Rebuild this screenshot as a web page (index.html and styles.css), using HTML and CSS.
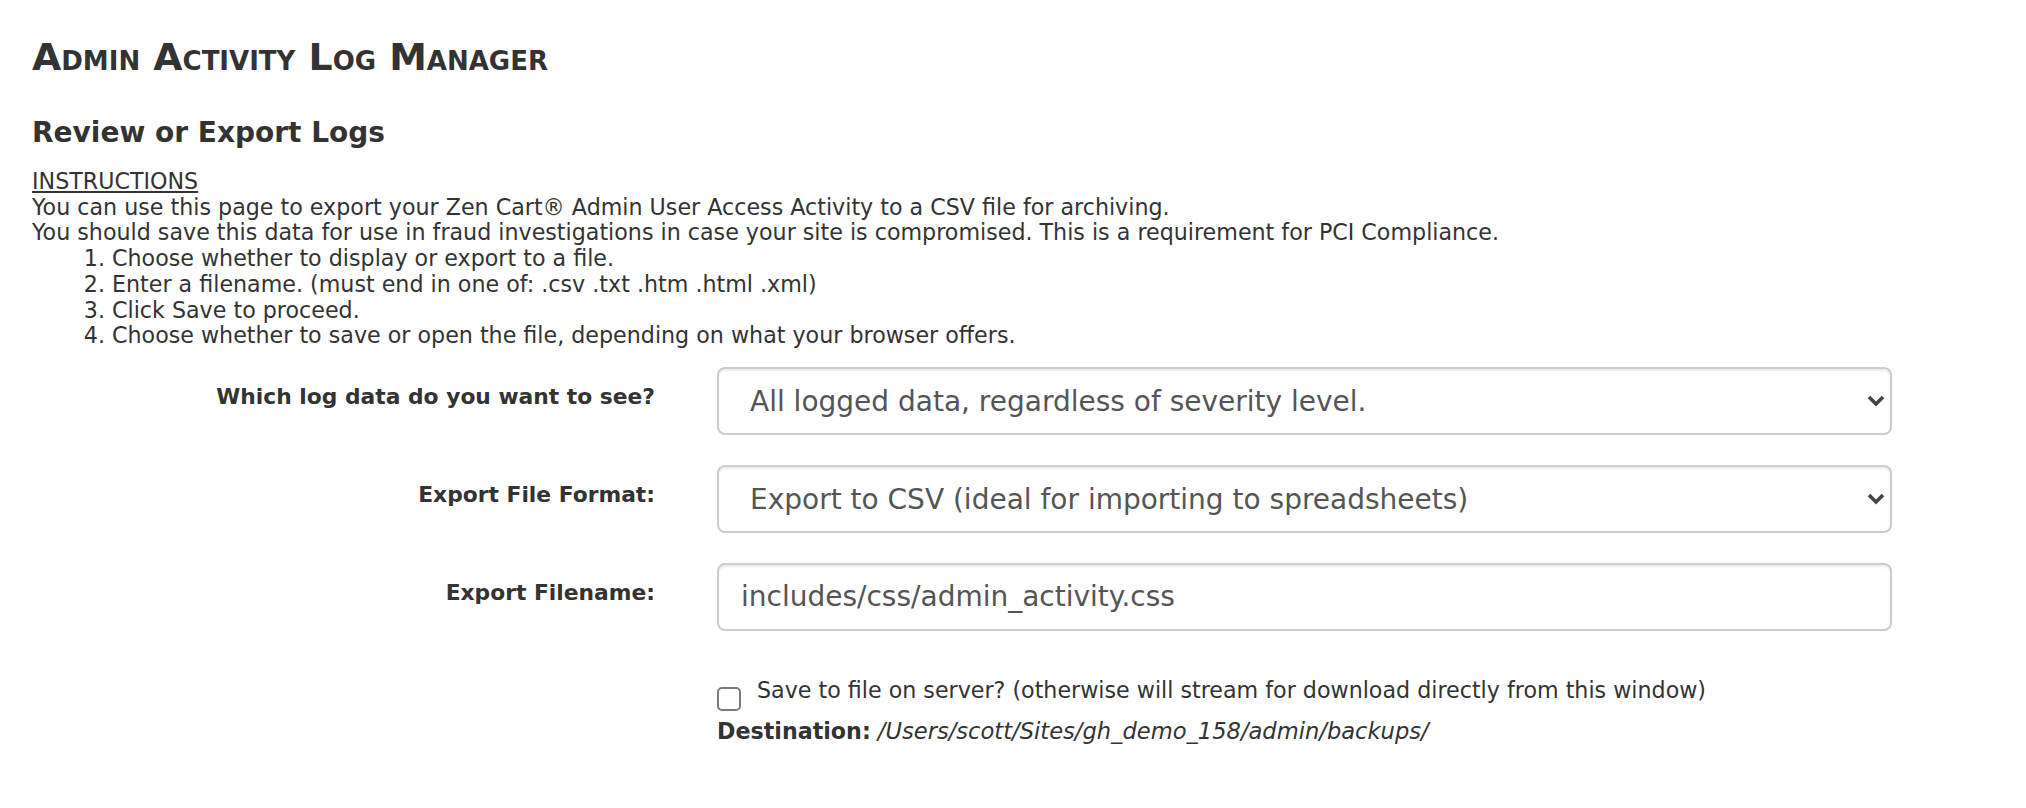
FILE: index.html
```html
<!DOCTYPE html>
<html lang="en">
<head>
<meta charset="utf-8">
<title>Admin Activity Log Manager</title>
<link rel="stylesheet" href="styles.css">
</head>
<body>
<div class="page">
  <h1 class="title">Admin Activity Log Manager</h1>
  <h2 class="subtitle">Review or Export Logs</h2>
  <div class="instructions">
    <div class="instr-head">INSTRUCTIONS</div>
    <div>You can use this page to export your Zen Cart® Admin User Access Activity to a CSV file for archiving.</div>
    <div>You should save this data for use in fraud investigations in case your site is compromised. This is a requirement for PCI Compliance.</div>
    <ol class="steps">
      <li>Choose whether to display or export to a file.</li>
      <li>Enter a filename. (must end in one of: .csv .txt .htm .html .xml)</li>
      <li>Click Save to proceed.</li>
      <li>Choose whether to save or open the file, depending on what your browser offers.</li>
    </ol>
  </div>
  <form class="form">
    <div class="form-row">
      <label class="form-label" for="filter">Which log data do you want to see?</label>
      <div class="select-wrap">
        <select class="control select" id="filter">
          <option>All logged data, regardless of severity level.</option>
        </select>
        <svg class="chevron" viewBox="0 0 18 12" width="18" height="12" aria-hidden="true"><polyline points="2,2 9,9 16,2" fill="none" stroke="#454545" stroke-width="3.6"/></svg>
      </div>
    </div>
    <div class="form-row">
      <label class="form-label" for="format">Export File Format:</label>
      <div class="select-wrap">
        <select class="control select" id="format">
          <option>Export to CSV (ideal for importing to spreadsheets)</option>
        </select>
        <svg class="chevron" viewBox="0 0 18 12" width="18" height="12" aria-hidden="true"><polyline points="2,2 9,9 16,2" fill="none" stroke="#454545" stroke-width="3.6"/></svg>
      </div>
    </div>
    <div class="form-row">
      <label class="form-label" for="filename">Export Filename:</label>
      <input class="control input" id="filename" type="text" value="includes/css/admin_activity.css">
    </div>
    <div class="form-row form-row-last">
      <div></div>
      <div class="save-block">
        <label class="check-row"><input class="check" type="checkbox"><span>Save to file on server? (otherwise will stream for download directly from this window)</span></label>
        <div class="dest"><strong>Destination:</strong> <em>/Users/scott/Sites/gh_demo_158/admin/backups/</em></div>
      </div>
    </div>
  </form>
</div>
</body>
</html>
```

FILE: styles.css
```css
* { box-sizing: border-box; }

html, body {
  margin: 0;
  background: #ffffff;
}

body {
  font-family: "DejaVu Sans", Verdana, sans-serif;
  font-size: 22.2px;
  line-height: 25.71px;
  color: #333333;
}

.page {
  padding: 38px 32px 0 32px;
}

.title {
  margin: 0;
  font-size: 37.8px;
  line-height: 38px;
  font-weight: bold;
  font-variant: small-caps;
}

.subtitle {
  margin: 42px 0 0 0;
  font-size: 28px;
  line-height: 30px;
  font-weight: bold;
}

.instructions {
  margin-top: 21px;
}

.instr-head {
  text-decoration: underline;
}

.steps {
  margin: 0;
  padding-left: 80px;
}

.form {
  margin-top: 18px;
}

.form-row {
  display: grid;
  grid-template-columns: 623px 1175px;
  column-gap: 62px;
  margin-bottom: 30px;
}

.form-row-last {
  margin-top: 47px;
}

.form-label {
  text-align: right;
  font-weight: bold;
  font-size: 21.8px;
  padding-top: 17px;
}

.select-wrap {
  position: relative;
}

.control {
  display: block;
  width: 100%;
  height: 68px;
  border: 2px solid #cccccc;
  border-radius: 8px;
  background: #ffffff;
  box-shadow: inset 0 2px 2px rgba(0, 0, 0, 0.075);
  font-family: "DejaVu Sans", Verdana, sans-serif;
  font-size: 28px;
  color: #555555;
  margin: 0;
  outline: none;
}

.select {
  appearance: none;
  -webkit-appearance: none;
  padding: 2px 40px 0 31px;
}

.input {
  padding: 0 22px;
}

.chevron {
  position: absolute;
  right: 7px;
  top: 28px;
  pointer-events: none;
}

.save-block {
  display: flex;
  flex-direction: column;
}

.check-row {
  display: flex;
  align-items: flex-start;
  gap: 16px;
}

.check {
  appearance: none;
  -webkit-appearance: none;
  width: 24px;
  height: 24px;
  margin: 9px 0 0 0;
  border: 2px solid #7a7a7a;
  border-radius: 5px;
  background: #ffffff;
  flex: none;
}

.dest {
  margin-top: 8px;
}

.dest em {
  font-style: italic;
  font-size: 22.6px;
}
```
